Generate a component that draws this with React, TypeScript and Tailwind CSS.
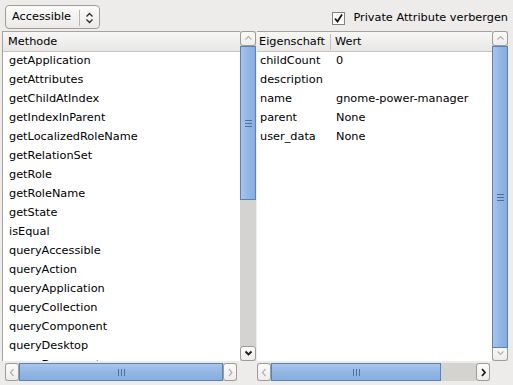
import React from "react";

const methods = [
  "getApplication",
  "getAttributes",
  "getChildAtIndex",
  "getIndexInParent",
  "getLocalizedRoleName",
  "getRelationSet",
  "getRole",
  "getRoleName",
  "getState",
  "isEqual",
  "queryAccessible",
  "queryAction",
  "queryApplication",
  "queryCollection",
  "queryComponent",
  "queryDesktop",
  "queryDocument",
];

const props = [
  ["childCount", "0"],
  ["description", ""],
  ["name", "gnome-power-manager"],
  ["parent", "None"],
  ["user_data", "None"],
];

function Arrow({ dir, active }: { dir: "up" | "down" | "left" | "right"; active?: boolean }) {
  const d = {
    up: "M1.5 5.5 L4.5 2.5 L7.5 5.5",
    down: "M1.5 2.5 L4.5 5.5 L7.5 2.5",
    left: "M5.5 1 L2.5 4.5 L5.5 8",
    right: "M3 1 L6 4.5 L3 8",
  }[dir];
  return (
    <svg width="9" height="9" viewBox="0 0 9 9">
      <path d={d} fill="none" stroke={active ? "#1a1a1a" : "#b4b1ad"} strokeWidth={active ? 1.8 : 1.2} />
    </svg>
  );
}

function ScrollButton({ dir, active, className }: { dir: "up" | "down" | "left" | "right"; active?: boolean; className: string }) {
  return (
    <div
      className={`flex items-center justify-center rounded-[3px] border border-[#9f9c98] bg-gradient-to-b from-[#fbfbfa] to-[#eeedec] ${className}`}
    >
      <Arrow dir={dir} active={active} />
    </div>
  );
}

function VScroll({ thumb }: { thumb: number }) {
  return (
    <div className="flex w-[16px] flex-col bg-[#d5d3d0]">
      <ScrollButton dir="up" className="h-[15px] w-[16px]" />
      <div className="relative flex-1">
        <div
          className="absolute left-0 right-0 top-0 flex items-center justify-center border border-[#5a82b8] bg-gradient-to-r from-[#a9c5ea] via-[#93b6e4] to-[#87ade0]"
          style={{ height: thumb }}
        >
          <div className="flex flex-col gap-[2px]">
            <div className="h-px w-[7px] bg-[#4f6f9e]" />
            <div className="h-px w-[7px] bg-[#4f6f9e]" />
            <div className="h-px w-[7px] bg-[#4f6f9e]" />
          </div>
        </div>
      </div>
      <ScrollButton dir="down" active={thumb < 200} className="h-[15px] w-[16px]" />
    </div>
  );
}

function HScroll({ thumb, rightActive }: { thumb: number; rightActive?: boolean }) {
  return (
    <div className="flex h-[18px] bg-[#d5d3d0]">
      <ScrollButton dir="left" className="h-[18px] w-[14px]" />
      <div className="relative flex-1">
        <div
          className="absolute bottom-0 left-0 top-0 flex items-center justify-center border border-[#5a82b8] bg-gradient-to-b from-[#a9c5ea] via-[#93b6e4] to-[#87ade0]"
          style={{ width: thumb }}
        >
          <div className="flex gap-[2px]">
            <div className="h-[7px] w-px bg-[#4f6f9e]" />
            <div className="h-[7px] w-px bg-[#4f6f9e]" />
            <div className="h-[7px] w-px bg-[#4f6f9e]" />
          </div>
        </div>
      </div>
      <ScrollButton dir="right" active={rightActive} className="h-[18px] w-[14px]" />
    </div>
  );
}

export default function App() {
  return (
    <div
      className="flex h-[385px] w-[513px] flex-col overflow-hidden bg-[#edeceb] text-[11.3px] text-black"
      style={{ fontFamily: '"DejaVu Sans", sans-serif' }}
    >
      {/* top toolbar */}
      <div className="flex h-[31px] items-start justify-between pl-[5px] pr-[5px] pt-[5px]">
        <div className="flex h-[24px] w-[95px] items-center rounded-[4px] border border-[#a19e9a] bg-gradient-to-b from-[#fbfbfa] to-[#ebeae8] pt-[1px]">
          <span className="pl-[6px]">Accessible</span>
          <div className="ml-auto h-[16px] w-px bg-[#b8b5b1]" />
          <svg className="mx-[5px]" width="9" height="14" viewBox="0 0 9 14">
            <path d="M1.5 5.5 L4.5 2.5 L7.5 5.5 M1.5 8.5 L4.5 11.5 L7.5 8.5" fill="none" stroke="#2a2a2a" strokeWidth="1.3" />
          </svg>
        </div>
        <div className="mt-[5px] flex items-center gap-[8px]">
          <div className="flex h-[13px] w-[13px] items-center justify-center border border-[#85827e] bg-white">
            <svg width="11" height="11" viewBox="0 0 11 11">
              <path d="M2 5.5 L4.5 8.5 L9 1.5" fill="none" stroke="#111" strokeWidth="1.8" />
            </svg>
          </div>
          <span>Private Attribute verbergen</span>
        </div>
      </div>

      {/* panes */}
      <div className="flex flex-1 pb-[4px] pl-[2px] pr-[5px]">
        {/* left pane */}
        <div className="flex w-[254px] flex-col">
          <div className="flex h-[330px]">
            <div className="flex flex-1 flex-col overflow-hidden border-l border-t border-[#a6a39f] bg-white">
              <div className="flex h-[20px] shrink-0 items-center border-b border-[#c9c6c2] bg-gradient-to-b from-[#f7f7f6] to-[#e8e7e5] pl-[5px] pt-[1px]">
                Methode
              </div>
              {methods.map((m) => (
                <div key={m} className="flex h-[19px] shrink-0 items-center pl-[6px]">
                  {m}
                </div>
              ))}
            </div>
            <VScroll thumb={154} />
          </div>
          <div className="mr-[19px] ml-[3px] mt-[2px]">
            <HScroll thumb={204} />
          </div>
        </div>

        <div className="w-[1px]" />

        {/* right pane */}
        <div className="flex flex-1 flex-col">
          <div className="flex h-[330px]">
            <div className="flex flex-1 flex-col overflow-hidden border-t border-[#a6a39f] bg-white">
              <div className="flex h-[20px] shrink-0 items-center border-b border-[#c9c6c2] bg-gradient-to-b from-[#f7f7f6] to-[#e8e7e5] pt-[1px]">
                <div className="flex w-[74px] items-center border-r border-[#c4c1bd] pl-[2px]">Eigenschaft</div>
                <div className="pl-[4px]">Wert</div>
              </div>
              {props.map(([k, v]) => (
                <div key={k} className="flex h-[19px] shrink-0 items-center">
                  <div className="w-[78px] pl-[3px]">{k}</div>
                  <div className="pl-[1px]">{v}</div>
                </div>
              ))}
            </div>
            <VScroll thumb={302} />
          </div>
          <div className="mr-[18px] ml-[0px] mt-[2px]">
            <HScroll thumb={170} rightActive />
          </div>
        </div>
      </div>
    </div>
  );
}
